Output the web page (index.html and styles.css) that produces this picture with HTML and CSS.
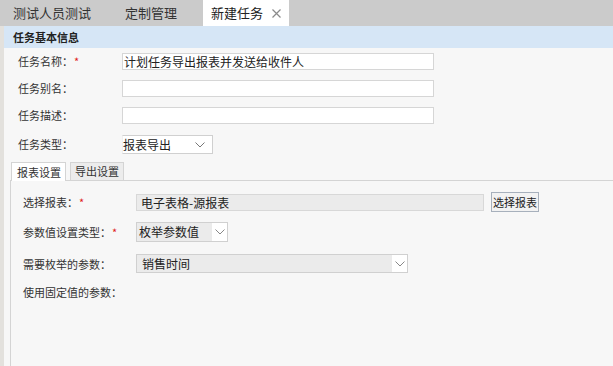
FILE: index.html
```html
<!DOCTYPE html>
<html lang="zh-CN">
<head>
<meta charset="utf-8">
<title>新建任务</title>
<link rel="stylesheet" href="styles.css">
</head>
<body>
<div class="tabbar">
  <div class="tab tab-1">测试人员测试</div>
  <div class="tab tab-2">定制管理</div>
  <div class="tab tab-active">新建任务<span class="close"><svg width="9" height="9" viewBox="0 0 9 9"><path d="M0.5 0.5 L8.5 8.5 M8.5 0.5 L0.5 8.5" fill="none" stroke="#8a8a8a" stroke-width="1.2"/></svg></span></div>
</div>
<div class="main">
  <div class="section-title">任务基本信息</div>
  <div class="form">
    <div class="row">
      <div class="label">任务名称<span class="colon">：</span><span class="req">*</span></div>
      <div class="input wide">计划任务导出报表并发送给收件人</div>
    </div>
    <div class="row">
      <div class="label">任务别名<span class="colon">：</span></div>
      <div class="input wide"></div>
    </div>
    <div class="row">
      <div class="label">任务描述<span class="colon">：</span></div>
      <div class="input wide"></div>
    </div>
    <div class="row row-select">
      <div class="label">任务类型<span class="colon">：</span></div>
      <div class="select select-type">
        <span class="select-text">报表导出</span>
        <span class="arrow"><svg width="10" height="6" viewBox="0 0 10 6"><path d="M0.5 0.5 L5 5 L9.5 0.5" fill="none" stroke="#777" stroke-width="1"/></svg></span>
      </div>
    </div>
  </div>
  <div class="subtabs">
    <div class="subtab active">报表设置</div>
    <div class="subtab">导出设置</div>
  </div>
  <div class="panel">
    <div class="prow prow-1">
      <div class="plabel">选择报表<span class="colon">：</span><span class="req">*</span></div>
      <div class="input disabled">电子表格-源报表</div>
      <div class="btn">选择报表</div>
    </div>
    <div class="prow prow-2">
      <div class="plabel">参数值设置类型<span class="colon">：</span><span class="req">*</span></div>
      <div class="select gray select-enum">
        <span class="select-text">枚举参数值</span>
        <span class="arrow white"><svg width="10" height="6" viewBox="0 0 10 6"><path d="M0.5 0.5 L5 5 L9.5 0.5" fill="none" stroke="#888" stroke-width="1"/></svg></span>
      </div>
    </div>
    <div class="prow prow-3">
      <div class="plabel">需要枚举的参数<span class="colon">：</span></div>
      <div class="select gray select-param">
        <span class="select-text">销售时间</span>
        <span class="arrow white"><svg width="10" height="6" viewBox="0 0 10 6"><path d="M0.5 0.5 L5 5 L9.5 0.5" fill="none" stroke="#888" stroke-width="1"/></svg></span>
      </div>
    </div>
    <div class="prow prow-4">
      <div class="plabel">使用固定值的参数<span class="colon">：</span></div>
    </div>
  </div>
</div>
</body>
</html>
```
FILE: styles.css
```css
* { box-sizing: border-box; }
html, body { margin: 0; padding: 0; }
body {
  width: 613px;
  height: 366px;
  overflow: hidden;
  background: #f7f7f7;
  font-family: "Noto Sans CJK SC", "Noto Sans", sans-serif;
  color: #333;
  display: flex;
  flex-direction: column;
}
.tabbar {
  height: 26px;
  background: #cbcbcb;
  display: flex;
  flex-shrink: 0;
}
.tab {
  height: 26px;
  line-height: 26px;
  font-size: 13px;
  color: #333;
  white-space: nowrap;
}
.tab-1 { width: 112px; padding-left: 13px; }
.tab-2 { width: 91px; padding-left: 13px; }
.tab-active {
  width: 86px;
  padding-left: 8px;
  background: #fff;
  color: #222;
  display: flex;
  align-items: center;
}
.close {
  display: flex;
  margin-left: 9px;
  margin-top: 1px;
}
.main {
  flex: 1;
  border-left: 4px solid #e3e1dd;
  display: flex;
  flex-direction: column;
}
.section-title {
  height: 22px;
  line-height: 22px;
  background: #d6e6f6;
  padding-left: 9px;
  font-size: 11px;
  font-weight: bold;
  color: #222;
}
.form {
  padding: 5px 0 0 14px;
  display: flex;
  flex-direction: column;
  gap: 10px;
}
.row {
  display: flex;
  align-items: center;
  height: 17px;
}
.row-select { height: 19px; margin-top: 1px; }
.label {
  width: 104px;
  font-size: 11px;
  line-height: 17px;
  color: #333;
  white-space: nowrap;
}
.colon { font-family: "Noto Sans CJK TC", "Noto Sans CJK SC", sans-serif; }
.req { color: #e02020; margin-left: 1px; }
.input {
  height: 17px;
  background: #fff;
  border: 1px solid #d6d6d6;
  font-size: 12px;
  line-height: 15px;
  color: #222;
  padding-left: 1px;
  white-space: nowrap;
}
.input.wide { width: 312px; }
.select {
  display: flex;
  align-items: stretch;
  background: #fff;
  border: 1px solid #d0d0d0;
  font-size: 12px;
  color: #222;
}
.select-text {
  flex: 1;
  line-height: 17px;
  white-space: nowrap;
}
.arrow {
  width: 18px;
  display: flex;
  align-items: center;
  justify-content: center;
}
.select-type { width: 91px; height: 19px; border-left-color: #f0f0f0; }
.select-type .arrow { width: 24px; }
.select.gray { background: #ebebeb; }
.arrow.white { background: #fff; width: 15px; }
.subtabs {
  display: flex;
  align-items: flex-start;
  gap: 4px;
  margin: 8px 0 -1px 7px;
  position: relative;
  z-index: 1;
}
.subtab {
  width: 54px;
  height: 18px;
  line-height: 17px;
  font-size: 11px;
  padding: 0 0 0 4px;
  border: 1px solid #d4d4d4;
  border-bottom: none;
  background: #ececec;
  color: #333;
  white-space: nowrap;
}
.subtab.active {
  background: #fff;
  width: 55px;
  height: 19px;
  line-height: 18px;
  padding-left: 5px;
}
.panel {
  flex: 1;
  margin-left: 6px;
  border-top: 1px solid #d4d4d4;
  border-left: 1px solid #d4d4d4;
  padding: 11px 0 0 12px;
  display: flex;
  flex-direction: column;
}
.prow {
  display: flex;
  align-items: center;
}
.plabel {
  width: 113px;
  font-size: 11px;
  line-height: 16px;
  color: #333;
  white-space: nowrap;
}
.prow-1 { height: 20px; }
.input.disabled {
  width: 348px;
  height: 17px;
  background: #ebebeb;
  border-color: #d8d8d8;
  padding-left: 4px;
  line-height: 15px;
}
.btn {
  margin-left: 7px;
  width: 48px;
  height: 20px;
  border: 1px solid #a7b0bc;
  background: #f2f2f2;
  font-size: 11px;
  line-height: 18px;
  text-align: center;
  color: #222;
  white-space: nowrap;
}
.prow-2 { margin-top: 10px; height: 20px; }
.select-enum { width: 92px; height: 20px; }
.select-enum .select-text { padding-left: 2px; line-height: 18px; }
.prow-3 { margin-top: 12px; height: 19px; }
.select-param { width: 272px; height: 19px; }
.select-param .select-text { padding-left: 5px; line-height: 17px; }
.prow-4 { margin-top: 11px; height: 16px; }
```
